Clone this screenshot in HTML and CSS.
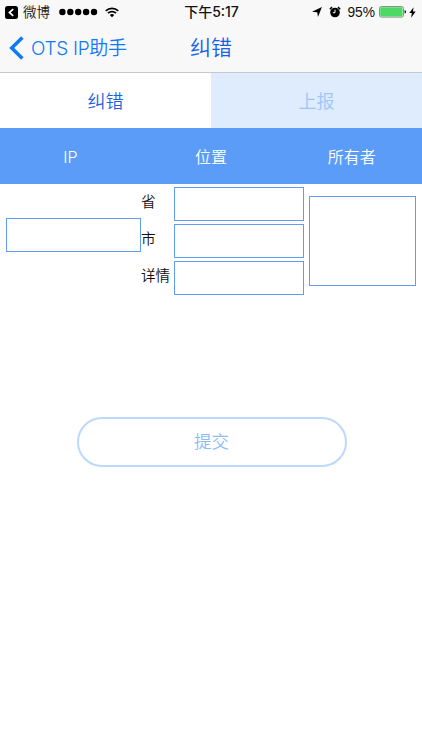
FILE: index.html
```
<!DOCTYPE html>
<html lang="zh-CN">

<head>
    <meta charset="UTF-8">
    <meta name="viewport" content="width=device-width, initial-scale=1.0">
    <title>纠错</title>
    <link rel="stylesheet" href="styles.css">
</head>

<body>
    <header>
        <div class="status">
            <div class="status-left">
                <svg class="back-app" width="13" height="13" viewBox="0 0 13 13">
                    <rect width="13" height="13" rx="2.5" fill="#000" />
                    <path d="M8.2 3.1 4.4 6.5l3.8 3.4" fill="none" stroke="#fff" stroke-width="1.7" />
                </svg>
                <span class="app">微博</span>
                <svg class="signal" width="39" height="8" viewBox="0 0 39 8">
                    <circle cx="3.4" cy="4" r="3.2" />
                    <circle cx="11.3" cy="4" r="3.2" />
                    <circle cx="19.2" cy="4" r="3.2" />
                    <circle cx="27.1" cy="4" r="3.2" />
                    <circle cx="35" cy="4" r="3.2" />
                </svg>
                <svg class="wifi" width="14" height="11" viewBox="0 0 14 11">
                    <path d="M.8 3.9a8.9 8.9 0 0 1 12.4 0M3 6.2a5.8 5.8 0 0 1 8 0" fill="none" stroke="#000" stroke-width="1.7" />
                    <path d="M4.8 8a3.2 3.2 0 0 1 4.4 0L7 10.3z" />
                </svg>
            </div>
            <span class="time">下午5:17</span>
            <div class="status-right">
                <svg class="location" width="10" height="10" viewBox="0 0 10 10">
                    <path d="M9.9.1 6 9.9 5.2 5.2 0 4.8z" />
                </svg>
                <svg class="alarm" width="12" height="12" viewBox="0 0 12 12">
                    <circle cx="6" cy="6.5" r="4.8" />
                    <path d="M.8 3.2 3 1.1M11.2 3.2 9 1.1" fill="none" stroke="#000" stroke-width="1.5" />
                    <path d="M6 3.7v3H3.8" fill="none" stroke="#fff" stroke-width="1" />
                </svg>
                <span class="percent">95%</span>
                <svg class="battery" width="28" height="12" viewBox="0 0 28 12">
                    <rect x=".5" y=".5" width="24" height="10.6" rx="1.8" fill="#fff" stroke="#8d8d8d" />
                    <rect x="1.2" y="1.2" width="22.4" height="9.2" rx=".5" fill="#4cd964" />
                    <path d="M25.6 4c1.8.3 1.8 3.3 0 3.6z" />
                </svg>
                <svg class="bolt" width="7" height="11" viewBox="0 0 6 10">
                    <path d="M4 .2.1 5.4h2.3L1.7 9.8 5.9 4H3.4z" />
                </svg>
            </div>
        </div>
        <nav>
            <a class="back">
                <svg width="15" height="24" viewBox="0 0 15 24">
                    <path d="M13.4 1.4 2.7 12l10.7 10.6" fill="none" stroke="#0f7af5" stroke-width="3.5" />
                </svg>
                <span>OTS IP助手</span>
            </a>
            <h1>纠错</h1>
        </nav>
    </header>
    <main>
        <div class="tabs">
            <div class="tab active">纠错</div>
            <div class="tab">上报</div>
        </div>
        <div class="thead">
            <div>IP</div>
            <div>位置</div>
            <div>所有者</div>
        </div>
        <form>
            <div class="row">
                <input class="ip" type="text">
                <div class="place">
                    <label><span>省</span><input type="text"></label>
                    <label><span>市</span><input type="text"></label>
                    <label><span>详情</span><input type="text"></label>
                </div>
                <textarea class="owner"></textarea>
            </div>
            <button class="submit" type="button">提交</button>
        </form>
    </main>
</body>

</html>
```
FILE: styles.css
```
* {
    box-sizing: border-box;
}

body {
    margin: 0;
    height: 750px;
    background: #fff;
    color: #111;
    font-family: Inter, "Liberation Sans", "Noto Sans CJK SC", sans-serif;
    font-weight: 350;
    overflow: hidden;
}

svg {
    display: block;
    flex: none;
}

header {
    height: 73px;
    background: #f8f8f8;
    border-bottom: 1px solid #c5c8cd;
}

.status {
    display: grid;
    grid-template-columns: 1fr auto 1fr;
    height: 24px;
    align-items: center;
    font-size: 13.5px;
    line-height: 24px;
    white-space: nowrap;
}

.status-left,
.status-right {
    display: flex;
    align-items: center;
    height: 24px;
}

.status-left {
    padding-left: 5px;
}

.app {
    margin-left: 5px;
}

.signal {
    margin-left: 9px;
}

.wifi {
    margin-left: 7px;
}

.time {
    padding-left: 1px;
    font-weight: 500;
    font-size: 14px;
}

.status-right {
    justify-content: flex-end;
    padding-right: 6px;
}

.alarm {
    margin-left: 7px;
}

.percent {
    margin-left: 6px;
    padding-top: 1px;
    font-family: "Liberation Sans", sans-serif;
    font-size: 13.8px;
}

.battery {
    margin-left: 4px;
}

.bolt {
    margin-left: 2px;
}

nav {
    display: grid;
    grid-template-columns: 1fr auto 1fr;
    height: 47px;
    align-items: center;
}

.back {
    display: flex;
    align-items: center;
    padding-left: 9px;
    color: #0f7af5;
    font-size: 19px;
    line-height: 30px;
    white-space: nowrap;
}

.back span {
    margin-left: 7px;
    padding-top: 2px;
    letter-spacing: -0.3px;
}

h1 {
    margin: 0;
    color: #1260e8;
    font-size: 21px;
    font-weight: 350;
    line-height: 30px;
}

.tabs {
    display: flex;
    height: 55px;
}

.tab {
    flex: 1;
    background: #dfecfe;
    color: #9bc5fb;
    font-size: 18px;
    line-height: 57px;
    text-align: center;
}

.tab.active {
    background: #fff;
    color: #1c62e0;
}

.thead {
    display: flex;
    height: 56px;
    background: #5a9cf8;
    color: #fff;
    font-size: 16px;
    line-height: 58px;
    text-align: center;
}

.thead div {
    flex: 1;
}

.row {
    display: flex;
    align-items: flex-start;
    padding: 3px 6px 0;
}

input,
textarea {
    display: block;
    margin: 0;
    padding: 0 4px;
    border: 1px solid #5f9df3;
    border-radius: 0;
    background: #fff;
    outline: none;
    resize: none;
}

input {
    height: 34px;
}

.ip {
    width: 135px;
    margin-top: 31px;
}

.place {
    display: flex;
    flex-direction: column;
    gap: 3px;
    width: 163px;
}

.place label {
    display: flex;
}

.place span {
    width: 33px;
    font-size: 14.6px;
    line-height: 31px;
}

.place input {
    width: 130px;
}

.owner {
    width: 107px;
    height: 90px;
    margin: 9px 0 0 5px;
}

.submit {
    display: block;
    width: 270px;
    height: 50px;
    margin: 122px 75px 0 77px;
    padding: 0 1px 3px 0;
    border: 2px solid #bcd8fb;
    border-radius: 25px;
    background: #fff;
    color: #8abcf8;
    font-family: inherit;
    font-size: 17.5px;
    font-weight: 350;
}
```
